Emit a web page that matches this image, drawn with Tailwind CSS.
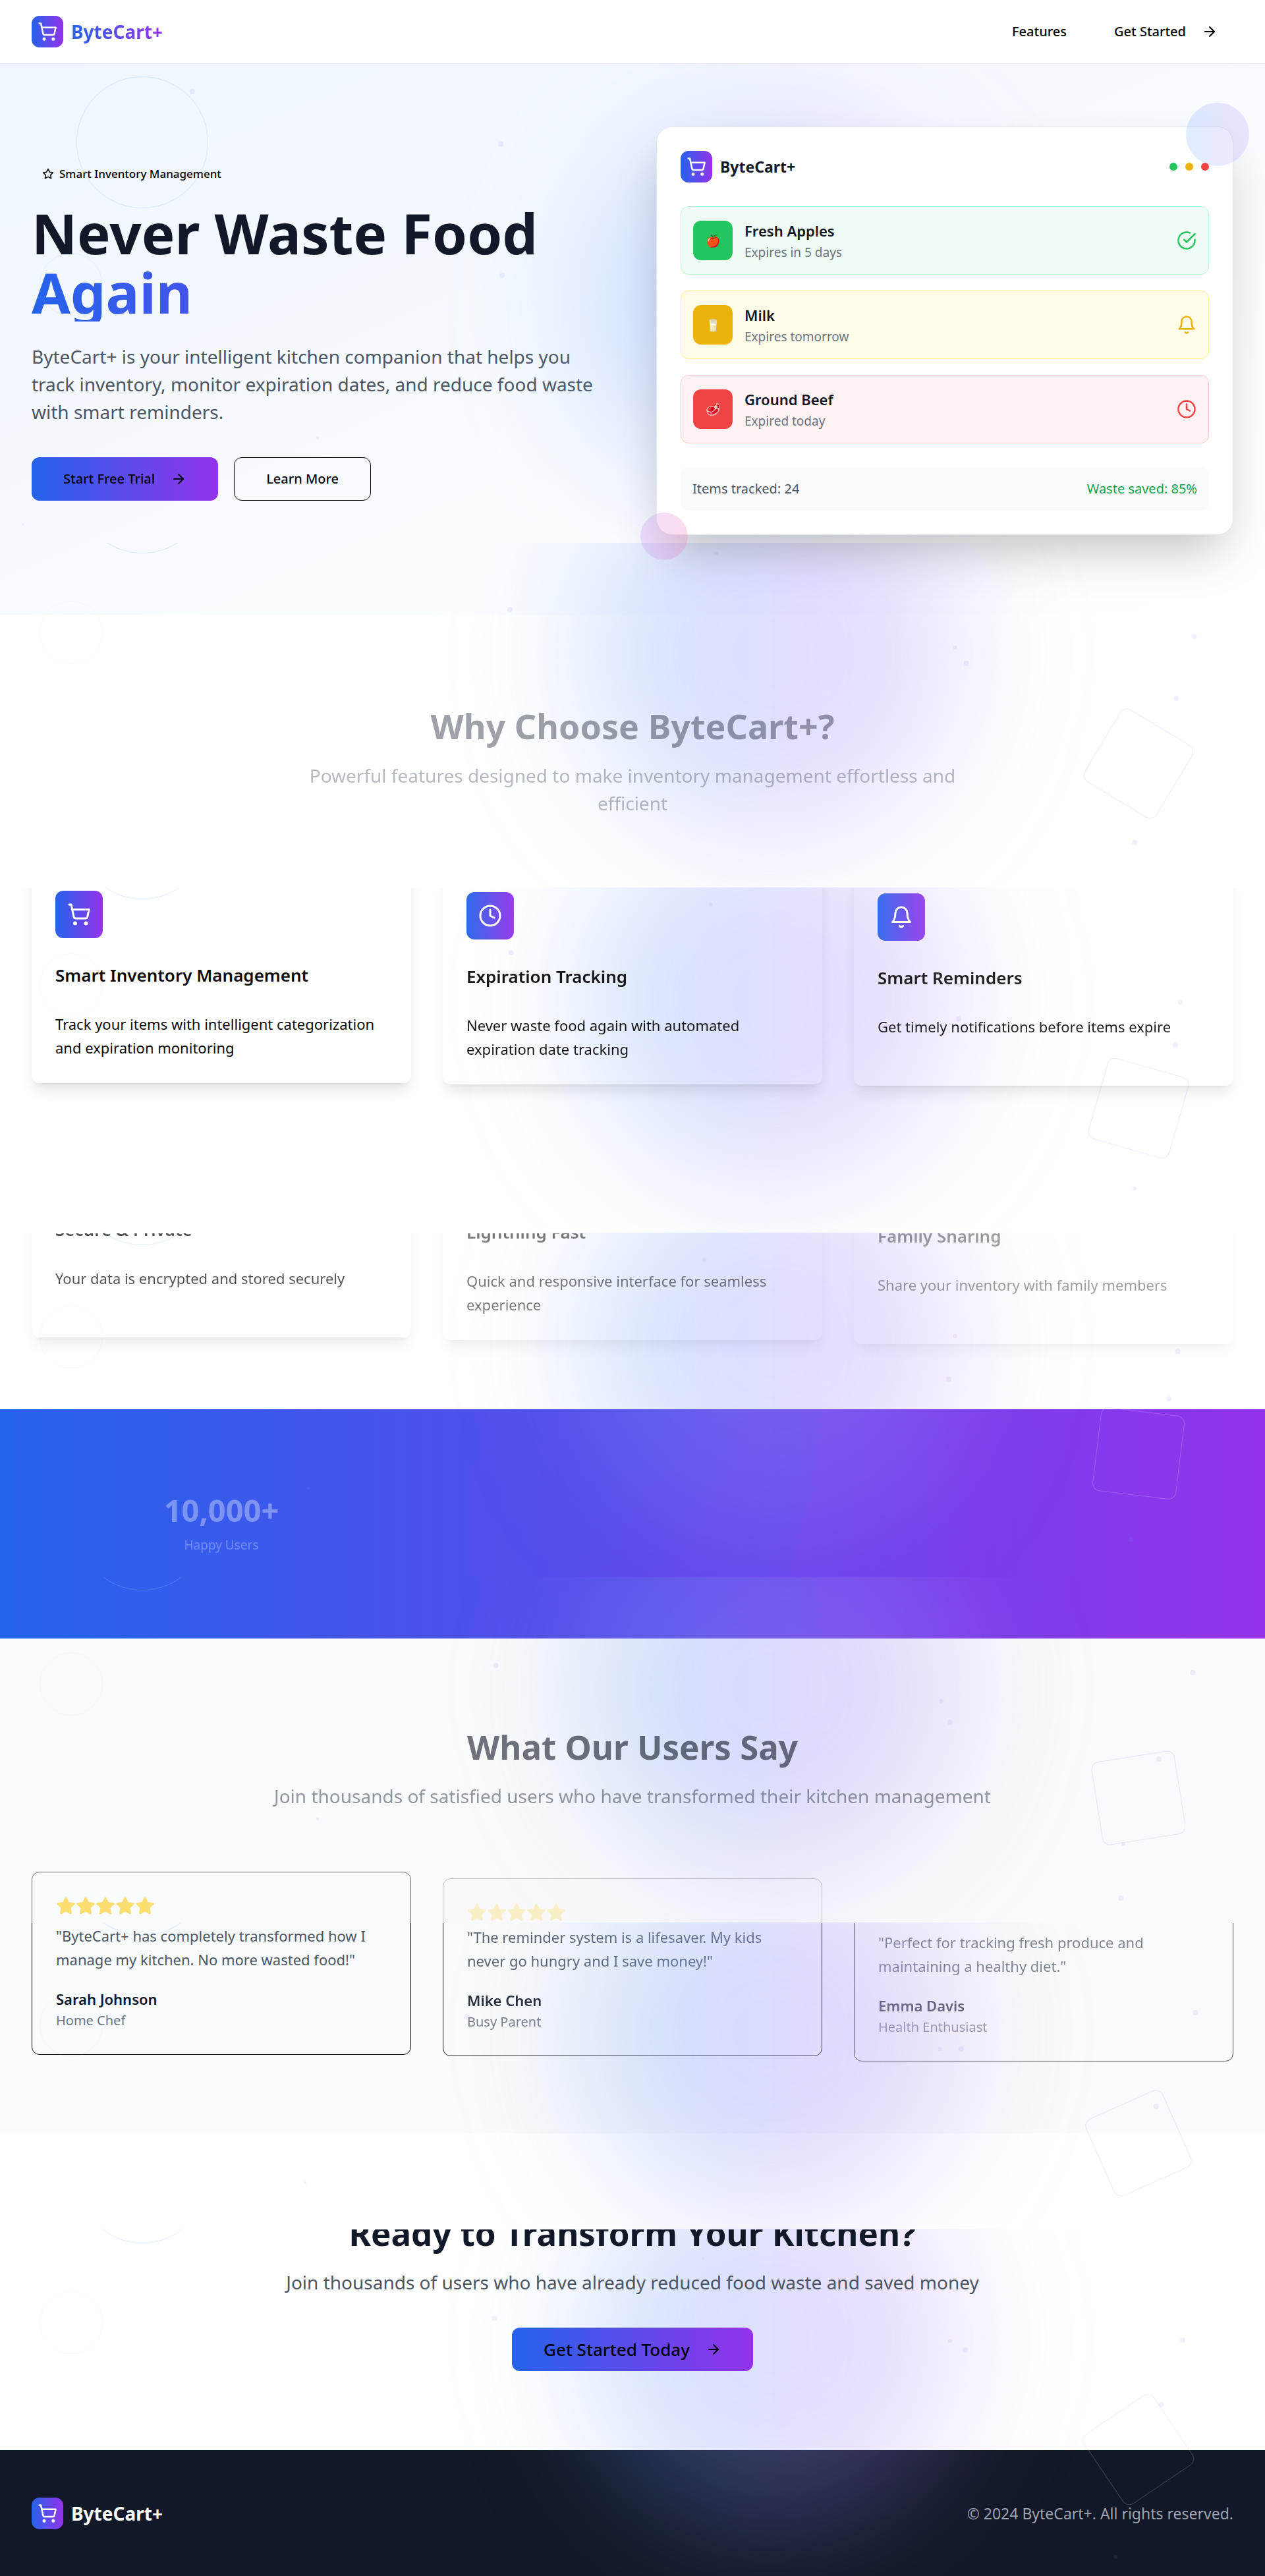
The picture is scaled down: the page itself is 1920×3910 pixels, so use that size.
<!DOCTYPE html>
<html lang="en">
<head>
<meta charset="utf-8">
<meta name="viewport" content="width=device-width, initial-scale=1">
<title>ByteCart+</title>
<script src="https://cdn.jsdelivr.net/npm/@tailwindcss/browser@4"></script>
</head>
<body class="bg-white font-['Noto_Sans','Open_Sans',sans-serif] text-[22px] leading-9 text-neutral-950">
<svg class="hidden" aria-hidden="true">
  <symbol id="cart" viewBox="0 0 24 24"><circle cx="8" cy="21" r="1"/><circle cx="19" cy="21" r="1"/><path d="M2.05 2.05h2l2.66 12.42a2 2 0 0 0 2 1.58h9.78a2 2 0 0 0 1.95-1.57l1.65-7.43H5.12"/></symbol>
  <symbol id="arrow" viewBox="0 0 24 24"><path d="M5 12h14"/><path d="m12 5 7 7-7 7"/></symbol>
  <symbol id="star" viewBox="0 0 24 24"><path d="M12 2l3.09 6.26L22 9.27l-5 4.87 1.18 6.88L12 17.77l-6.18 3.25L7 14.14 2 9.27l6.91-1.01L12 2z"/></symbol>
  <symbol id="check" viewBox="0 0 24 24"><path d="M22 11.08V12a10 10 0 1 1-5.93-9.14"/><path d="m9 11 3 3L22 4"/></symbol>
  <symbol id="bell" viewBox="0 0 24 24"><path d="M6 8a6 6 0 0 1 12 0c0 7 3 9 3 9H3s3-2 3-9"/><path d="M10.3 21a1.94 1.94 0 0 0 3.4 0"/></symbol>
  <symbol id="clock" viewBox="0 0 24 24"><circle cx="12" cy="12" r="10"/><path d="M12 6v6l4 2"/></symbol>
</svg>

<div class="relative flex min-h-screen flex-col">

  <header class="relative z-20 border-b border-gray-200 bg-white/90">
    <div class="flex h-24 items-center justify-between px-12">
      <a href="#" class="flex items-center gap-3">
        <span class="flex size-12 items-center justify-center rounded-xl bg-linear-to-r/srgb from-[#2563eb] to-[#9333ea]"><svg class="size-[30px] fill-none stroke-white stroke-2" stroke-linecap="round" stroke-linejoin="round"><use href="#cart"/></svg></span>
        <span class="bg-linear-to-r/srgb from-[#2563eb] to-[#9333ea] bg-clip-text text-[28px] font-bold text-transparent">ByteCart+</span>
      </a>
      <nav class="flex items-center gap-6 text-[20px] font-medium text-black">
        <a href="#features" class="px-6">Features</a>
        <a href="#start" class="flex items-center gap-6 px-6">Get Started <svg class="size-6 fill-none stroke-current stroke-2" stroke-linecap="round" stroke-linejoin="round"><use href="#arrow"/></svg></a>
      </nav>
    </div>
  </header>

  <main>
    <section class="grid grid-cols-2 items-center gap-18 bg-linear-to-br/srgb from-[#eff6ff] to-white px-12 pt-[95px] pb-[121px]">
      <div>
        <p class="flex h-10 items-center gap-2 px-4 text-[17px] font-medium text-black"><svg class="size-[18px] fill-none stroke-current stroke-2" stroke-linecap="round" stroke-linejoin="round"><use href="#star"/></svg>Smart Inventory Management</p>
        <h1 class="mt-6 text-[85px] leading-[90px] font-bold text-[#111827]">Never Waste Food <span class="block bg-linear-to-r/srgb from-[#2563eb] to-[#9333ea] bg-clip-text text-transparent">Again</span></h1>
        <p class="mt-8 text-[28px] leading-[42px] text-[#4b5563]">ByteCart+ is your intelligent kitchen companion that helps you track inventory, monitor expiration dates, and reduce food waste with smart reminders.</p>
        <div class="mt-12 flex gap-6 text-[20px] font-medium text-black">
          <button type="button" class="flex h-[66px] items-center gap-6 rounded-xl bg-linear-to-r/srgb from-[#2563eb] to-[#9333ea] px-12">Start Free Trial <svg class="size-6 fill-none stroke-current stroke-2" stroke-linecap="round" stroke-linejoin="round"><use href="#arrow"/></svg></button>
          <button type="button" class="h-[66px] rounded-xl border border-black px-12">Learn More</button>
        </div>
      </div>

      <div class="relative z-10">
        <div class="rounded-3xl border border-gray-200 bg-white p-9 shadow-[0_37px_75px_-18px_rgba(0,0,0,0.25)]">
          <div class="flex items-center justify-between">
            <div class="flex items-center gap-3">
              <span class="flex size-12 items-center justify-center rounded-xl bg-linear-to-r/srgb from-[#2563eb] to-[#9333ea]"><svg class="size-[30px] fill-none stroke-white stroke-2" stroke-linecap="round" stroke-linejoin="round"><use href="#cart"/></svg></span>
              <span class="text-[23px] font-bold text-[#111827]">ByteCart+</span>
            </div>
            <div class="flex gap-3"><i class="size-3 rounded-full bg-[#22c55e]"></i><i class="size-3 rounded-full bg-[#eab308]"></i><i class="size-3 rounded-full bg-[#ef4444]"></i></div>
          </div>
          <ul class="mt-9 flex flex-col gap-6">
            <li class="flex items-center gap-[18px] rounded-xl border border-[#bbf7d0] bg-[#f0fdf4] p-[18px]">
              <span class="flex size-[60px] items-center justify-center rounded-xl bg-[#22c55e] text-[18px]">🍎</span>
              <div class="flex-1"><p class="font-semibold text-[#111827]">Fresh Apples</p><p class="text-[19px] leading-[30px] text-[#6b7280]">Expires in 5 days</p></div>
              <svg class="size-[30px] fill-none stroke-[#22c55e] stroke-2" stroke-linecap="round" stroke-linejoin="round"><use href="#check"/></svg>
            </li>
            <li class="flex items-center gap-[18px] rounded-xl border border-[#fef08a] bg-[#fefce8] p-[18px]">
              <span class="flex size-[60px] items-center justify-center rounded-xl bg-[#eab308] text-[18px]">🥛</span>
              <div class="flex-1"><p class="font-semibold text-[#111827]">Milk</p><p class="text-[19px] leading-[30px] text-[#6b7280]">Expires tomorrow</p></div>
              <svg class="size-[30px] fill-none stroke-[#eab308] stroke-2" stroke-linecap="round" stroke-linejoin="round"><use href="#bell"/></svg>
            </li>
            <li class="flex items-center gap-[18px] rounded-xl border border-[#fecaca] bg-[#fef2f2] p-[18px]">
              <span class="flex size-[60px] items-center justify-center rounded-xl bg-[#ef4444] text-[18px]">🥩</span>
              <div class="flex-1"><p class="font-semibold text-[#111827]">Ground Beef</p><p class="text-[19px] leading-[30px] text-[#6b7280]">Expired today</p></div>
              <svg class="size-[30px] fill-none stroke-[#ef4444] stroke-2" stroke-linecap="round" stroke-linejoin="round"><use href="#clock"/></svg>
            </li>
          </ul>
          <div class="mt-9 flex justify-between rounded-xl bg-[#f9fafb] p-[18px] text-[20px] leading-[30px]"><span class="text-[#4b5563]">Items tracked: 24</span><span class="text-[#16a34a]">Waste saved: 85%</span></div>
        </div>
        <div class="absolute -top-9 -right-6 size-24 rounded-full bg-linear-to-r/srgb from-[#60a5fa]/20 to-[#c084fc]/20"></div>
        <div class="absolute -bottom-[38px] -left-6 size-18 rounded-full bg-linear-to-r/srgb from-[#c084fc]/25 to-[#f472b6]/25"></div>
      </div>
    </section>

    <section id="features" class="px-12 pt-[139px] pb-[119px]">
      <div class="relative z-10 text-center opacity-40">
        <h2 class="text-[52px] leading-[60px] font-bold text-[#111827]">Why Choose ByteCart+?</h2>
        <p class="mx-auto mt-6 max-w-[1008px] text-[28px] leading-[42px] text-[#4b5563]">Powerful features designed to make inventory management effortless and efficient</p>
      </div>
      <div class="relative z-10 mt-[76px] grid grid-cols-3 gap-12 [clip-path:inset(32px_-48px_-48px_-48px)]">
        <article class="rounded-xl p-9 shadow-[0_15px_22px_-4px_rgba(0,0,0,0.1),0_6px_9px_-6px_rgba(0,0,0,0.1)]">
          <span class="flex size-18 items-center justify-center rounded-xl bg-linear-to-r/srgb from-[#2563eb] to-[#9333ea]"><svg class="size-9 fill-none stroke-white stroke-2" stroke-linecap="round" stroke-linejoin="round"><use href="#cart"/></svg></span>
          <h3 class="my-[38px] text-[26px] font-semibold">Smart Inventory Management</h3>
          <p>Track your items with intelligent categorization and expiration monitoring</p>
        </article>
        <article class="translate-y-0.5 rounded-xl p-9 opacity-95 shadow-[0_15px_22px_-4px_rgba(0,0,0,0.1),0_6px_9px_-6px_rgba(0,0,0,0.1)]">
          <span class="flex size-18 items-center justify-center rounded-xl bg-linear-to-r/srgb from-[#2563eb] to-[#9333ea]"><svg class="size-9 fill-none stroke-white stroke-2" stroke-linecap="round" stroke-linejoin="round"><use href="#clock"/></svg></span>
          <h3 class="my-[38px] text-[26px] font-semibold">Expiration Tracking</h3>
          <p>Never waste food again with automated expiration date tracking</p>
        </article>
        <article class="translate-y-1 rounded-xl p-9 opacity-90 shadow-[0_15px_22px_-4px_rgba(0,0,0,0.1),0_6px_9px_-6px_rgba(0,0,0,0.1)]">
          <span class="flex size-18 items-center justify-center rounded-xl bg-linear-to-r/srgb from-[#2563eb] to-[#9333ea]"><svg class="size-9 fill-none stroke-white stroke-2" stroke-linecap="round" stroke-linejoin="round"><use href="#bell"/></svg></span>
          <h3 class="my-[38px] text-[26px] font-semibold">Smart Reminders</h3>
          <p>Get timely notifications before items expire</p>
        </article>
      </div>
      <div class="relative z-10 mt-12 grid grid-cols-3 gap-12 [clip-path:inset(180px_-48px_-60px_-48px)]">
        <article class="translate-y-2.5 rounded-xl p-9 opacity-70 shadow-[0_15px_22px_-4px_rgba(0,0,0,0.1),0_6px_9px_-6px_rgba(0,0,0,0.1)]">
          <span class="block size-18 rounded-xl bg-linear-to-r/srgb from-[#2563eb] to-[#9333ea]"></span>
          <h3 class="my-[38px] text-[26px] font-semibold">Secure &amp; Private</h3>
          <p>Your data is encrypted and stored securely</p>
        </article>
        <article class="translate-y-3.5 rounded-xl p-9 opacity-55 shadow-[0_15px_22px_-4px_rgba(0,0,0,0.1),0_6px_9px_-6px_rgba(0,0,0,0.1)]">
          <span class="block size-18 rounded-xl bg-linear-to-r/srgb from-[#2563eb] to-[#9333ea]"></span>
          <h3 class="my-[38px] text-[26px] font-semibold">Lightning Fast</h3>
          <p>Quick and responsive interface for seamless experience</p>
        </article>
        <article class="translate-y-5 rounded-xl p-9 opacity-40 shadow-[0_15px_22px_-4px_rgba(0,0,0,0.1),0_6px_9px_-6px_rgba(0,0,0,0.1)]">
          <span class="block size-18 rounded-xl bg-linear-to-r/srgb from-[#2563eb] to-[#9333ea]"></span>
          <h3 class="my-[38px] text-[26px] font-semibold">Family Sharing</h3>
          <p>Share your inventory with family members</p>
        </article>
      </div>
    </section>

    <section class="grid grid-cols-3 gap-12 bg-linear-to-r/srgb from-[#2563eb] to-[#9333ea] px-12 pt-[123px] pb-[127px] text-center text-white">
      <div class="relative z-10 opacity-35">
        <p class="text-[47px] leading-[60px] font-bold">10,000+</p>
        <p class="mt-2 text-[19px] leading-[30px] text-[#dbeafe]">Happy Users</p>
      </div>
    </section>

    <section class="bg-[#f9fafb] px-12 pt-[134px] pb-[109px]">
      <div class="relative z-10 text-center opacity-60">
        <h2 class="text-[51px] leading-[60px] font-bold text-[#111827]">What Our Users Say</h2>
        <p class="mt-6 text-[28px] leading-[42px] text-[#4b5563]">Join thousands of satisfied users who have transformed their kitchen management</p>
      </div>
      <div class="mt-[94px] grid grid-cols-3 items-start gap-12">
        <article class="relative rounded-xl border border-black p-9">
          <div class="flex"><svg class="size-[30px] fill-[#facc15] stroke-[#facc15] stroke-2" stroke-linejoin="round"><use href="#star"/></svg><svg class="size-[30px] fill-[#facc15] stroke-[#facc15] stroke-2" stroke-linejoin="round"><use href="#star"/></svg><svg class="size-[30px] fill-[#facc15] stroke-[#facc15] stroke-2" stroke-linejoin="round"><use href="#star"/></svg><svg class="size-[30px] fill-[#facc15] stroke-[#facc15] stroke-2" stroke-linejoin="round"><use href="#star"/></svg><svg class="size-[30px] fill-[#facc15] stroke-[#facc15] stroke-2" stroke-linejoin="round"><use href="#star"/></svg></div>
          <p class="mt-3 text-[#4b5563]">"ByteCart+ has completely transformed how I manage my kitchen. No more wasted food!"</p>
          <p class="mt-6 font-semibold text-[#111827]">Sarah Johnson</p>
          <p class="text-[20px] leading-[30px] text-[#6b7280]">Home Chef</p>
          <div class="absolute -inset-x-px -top-px h-[78px] bg-[#f9fafb]/40"></div>
        </article>
        <article class="relative mt-2.5 rounded-xl border border-black p-9 opacity-90">
          <div class="flex"><svg class="size-[30px] fill-[#facc15] stroke-[#facc15] stroke-2" stroke-linejoin="round"><use href="#star"/></svg><svg class="size-[30px] fill-[#facc15] stroke-[#facc15] stroke-2" stroke-linejoin="round"><use href="#star"/></svg><svg class="size-[30px] fill-[#facc15] stroke-[#facc15] stroke-2" stroke-linejoin="round"><use href="#star"/></svg><svg class="size-[30px] fill-[#facc15] stroke-[#facc15] stroke-2" stroke-linejoin="round"><use href="#star"/></svg><svg class="size-[30px] fill-[#facc15] stroke-[#facc15] stroke-2" stroke-linejoin="round"><use href="#star"/></svg></div>
          <p class="mt-1 text-[#4b5563]">"The reminder system is a lifesaver. My kids never go hungry and I save money!"</p>
          <p class="mt-6 font-semibold text-[#111827]">Mike Chen</p>
          <p class="text-[20px] leading-[30px] text-[#6b7280]">Busy Parent</p>
          <div class="absolute -inset-x-px -top-px h-[68px] bg-[#f9fafb]/75"></div>
        </article>
        <article class="mt-2.5 rounded-xl border border-black p-9 opacity-70 [clip-path:inset(68px_0_0_0)]">
          <div class="h-[30px]"></div>
          <p class="mt-3 text-[#4b5563]">"Perfect for tracking fresh produce and maintaining a healthy diet."</p>
          <p class="mt-6 font-semibold text-[#111827]">Emma Davis</p>
          <p class="text-[20px] leading-[30px] text-[#6b7280]">Health Enthusiast</p>
        </article>
      </div>
    </section>

    <section id="start" class="flex flex-col items-center px-12 pt-[121px] pb-[120px] text-center">
      <h2 class="relative z-10 text-[51px] leading-[60px] font-bold text-[#111827] [clip-path:inset(25px_0_-12px_0)]">Ready to Transform Your Kitchen?</h2>
      <p class="relative z-10 mt-6 text-[28px] leading-[42px] text-[#4b5563]">Join thousands of users who have already reduced food waste and saved money</p>
      <button type="button" class="relative z-10 mt-12 flex h-[66px] items-center gap-6 rounded-xl bg-linear-to-r/srgb from-[#2563eb] to-[#9333ea] px-12 text-[26px] font-medium text-black">Get Started Today <svg class="size-6 fill-none stroke-current stroke-2" stroke-linecap="round" stroke-linejoin="round"><use href="#arrow"/></svg></button>
    </section>
  </main>

  <footer class="flex items-center justify-between bg-[#111827] px-12 py-18 text-white">
    <a href="#" class="relative z-10 flex items-center gap-3">
      <span class="flex size-12 items-center justify-center rounded-xl bg-linear-to-r/srgb from-[#2563eb] to-[#9333ea]"><svg class="size-[30px] fill-none stroke-white stroke-2" stroke-linecap="round" stroke-linejoin="round"><use href="#cart"/></svg></span>
      <span class="text-[28px] font-bold">ByteCart+</span>
    </a>
    <p class="text-[23px] text-[#9ca3af]">© 2024 ByteCart+. All rights reserved.</p>
  </footer>

  <!-- Decorative layer: bands of glow, rings and tilted squares over the page -->
  <div class="pointer-events-none absolute inset-0 z-[5] flex flex-col overflow-hidden" aria-hidden="true">
    <div class="relative h-[824px] shrink-0 overflow-hidden">
      <div class="absolute top-[180px] left-[46%] size-[576px] rounded-full bg-linear-to-r/srgb from-[#60a5fa]/30 to-[#c084fc]/30 blur-[96px]"></div>
      <div class="absolute top-[116px] left-[116px] size-[200px] rounded-full border border-[#60a5fa]/20"></div>
      <div class="absolute top-[384px] left-[60px] size-24 rounded-full border border-[#60a5fa]/10"></div>
    </div>
    <div class="relative h-[523px] shrink-0 overflow-hidden">
      <div class="absolute -top-[120px] left-[46%] size-[576px] rounded-full bg-linear-to-r/srgb from-[#60a5fa]/30 to-[#c084fc]/30 blur-[96px]"></div>
      <div class="absolute -top-[184px] left-[116px] size-[200px] rounded-full border border-[#60a5fa]/20"></div>
      <div class="absolute top-[88px] left-[60px] size-24 rounded-full border border-[#818cf8]/5"></div>
      <div class="absolute top-[271px] right-[128px] size-32 rotate-[31deg] rounded-xl border border-[#a78bfa]/20"></div>
    </div>
    <div class="relative h-[524px] shrink-0 overflow-hidden">
      <div class="absolute -top-[120px] left-[46%] size-[576px] rounded-full bg-linear-to-r/srgb from-[#60a5fa]/30 to-[#c084fc]/30 blur-[96px]"></div>
      <div class="absolute -top-[182px] left-[116px] size-[200px] rounded-full border border-[#60a5fa]/20"></div>
      <div class="absolute top-[100px] left-[60px] size-24 rounded-full border border-[#818cf8]/5"></div>
      <div class="absolute top-[271px] right-[128px] size-32 rotate-[16deg] rounded-xl border border-[#a78bfa]/20"></div>
    </div>
    <div class="relative h-[523px] shrink-0 overflow-hidden">
      <div class="absolute -top-[120px] left-[46%] size-[576px] rounded-full bg-linear-to-r/srgb from-[#60a5fa]/30 to-[#c084fc]/30 blur-[96px]"></div>
      <div class="absolute -top-[181px] left-[116px] size-[200px] rounded-full border border-[#60a5fa]/20"></div>
      <div class="absolute top-[110px] left-[60px] size-24 rounded-full border border-[#818cf8]/5"></div>
      <div class="absolute top-[271px] right-[128px] size-32 rotate-[7deg] rounded-xl border border-[#d8b4fe]/30"></div>
    </div>
    <div class="relative h-[524px] shrink-0 overflow-hidden">
      <div class="absolute -top-[120px] left-[46%] size-[576px] rounded-full bg-linear-to-r/srgb from-[#60a5fa]/30 to-[#c084fc]/30 blur-[96px]"></div>
      <div class="absolute -top-[180px] left-[116px] size-[200px] rounded-full border border-[#93c5fd]/30"></div>
      <div class="absolute top-[114px] left-[60px] size-24 rounded-full border border-[#818cf8]/5"></div>
      <div class="absolute top-[271px] right-[128px] size-32 -rotate-[9deg] rounded-xl border border-[#a78bfa]/20"></div>
    </div>
    <div class="relative h-[465px] shrink-0 overflow-hidden">
      <div class="absolute -top-[120px] left-[46%] size-[576px] rounded-full bg-linear-to-r/srgb from-[#60a5fa]/30 to-[#c084fc]/30 blur-[96px]"></div>
      <div class="absolute -top-[180px] left-[116px] size-[200px] rounded-full border border-[#60a5fa]/20"></div>
      <div class="absolute top-[108px] left-[60px] size-24 rounded-full border border-[#818cf8]/5"></div>
      <div class="absolute top-[271px] right-[128px] size-32 -rotate-[24deg] rounded-xl border border-[#a78bfa]/20"></div>
    </div>
    <div class="relative flex-1 overflow-hidden">
      <div class="absolute -top-[120px] left-[46%] size-[576px] rounded-full bg-linear-to-r/srgb from-[#60a5fa]/30 to-[#c084fc]/30 blur-[96px]"></div>
      <div class="absolute -top-[178px] left-[116px] size-[200px] rounded-full border border-[#60a5fa]/20"></div>
      <div class="absolute top-[94px] left-[60px] size-24 rounded-full border border-[#818cf8]/5"></div>
      <div class="absolute top-[271px] right-[128px] size-32 -rotate-[34deg] rounded-xl border border-[#c4b5fd]/25"></div>
    </div>
    <svg class="absolute inset-0 size-full fill-[#818cf8]/12">
      <circle cx="15.2%" cy="139" r="4"/><circle cx="39.6%" cy="219" r="4"/><circle cx="39.7%" cy="418" r="4"/><circle cx="25.1%" cy="665" r="2"/><circle cx="1.8%" cy="796" r="2"/>
      <circle cx="40.3%" cy="925" r="4"/><circle cx="56.6%" cy="840" r="3"/><circle cx="75.5%" cy="983" r="3"/><circle cx="76.4%" cy="1007" r="4"/><circle cx="94.4%" cy="966" r="4"/><circle cx="93%" cy="1060" r="4"/><circle cx="89.7%" cy="1279" r="4"/>
      <circle cx="40.4%" cy="1446" r="4"/><circle cx="56.2%" cy="1373" r="3"/><circle cx="75.8%" cy="1495" r="3"/><circle cx="75.8%" cy="1547" r="4"/><circle cx="93.3%" cy="1521" r="4"/><circle cx="92.9%" cy="1586" r="4"/><circle cx="89.7%" cy="1804" r="3"/>
      <circle cx="55.7%" cy="1912" r="3"/><circle cx="75.5%" cy="2028" r="3"/><circle cx="93.1%" cy="2051" r="4"/><circle cx="75%" cy="2093" r="4"/><circle cx="92.4%" cy="2123" r="4"/><circle cx="89.4%" cy="2337" r="4"/><circle cx="24.4%" cy="2259" r="2"/>
      <circle cx="39.2%" cy="2528" r="4"/><circle cx="94.3%" cy="2539" r="4"/><circle cx="74.4%" cy="2582" r="3"/><circle cx="75.1%" cy="2614" r="4"/><circle cx="91.6%" cy="2670" r="4"/><circle cx="25.1%" cy="2761" r="2"/><circle cx="88.6%" cy="2881" r="4"/>
      <circle cx="88.8%" cy="2799" r="3"/><circle cx="36.9%" cy="3061" r="4"/><circle cx="94.5%" cy="3055" r="4"/><circle cx="76%" cy="3110" r="4"/><circle cx="74.3%" cy="3110" r="3"/><circle cx="91.4%" cy="3197" r="4"/>
      <circle cx="24.1%" cy="3313" r="2"/><circle cx="55.6%" cy="3428" r="2"/><circle cx="39.1%" cy="3519" r="4"/><circle cx="75.1%" cy="3553" r="3"/><circle cx="76.3%" cy="3567" r="4"/><circle cx="93.5%" cy="3552" r="4"/><circle cx="91.8%" cy="3650" r="4"/><circle cx="88.2%" cy="3881" r="3"/>
    </svg>
  </div>
</div>
</body>
</html>
